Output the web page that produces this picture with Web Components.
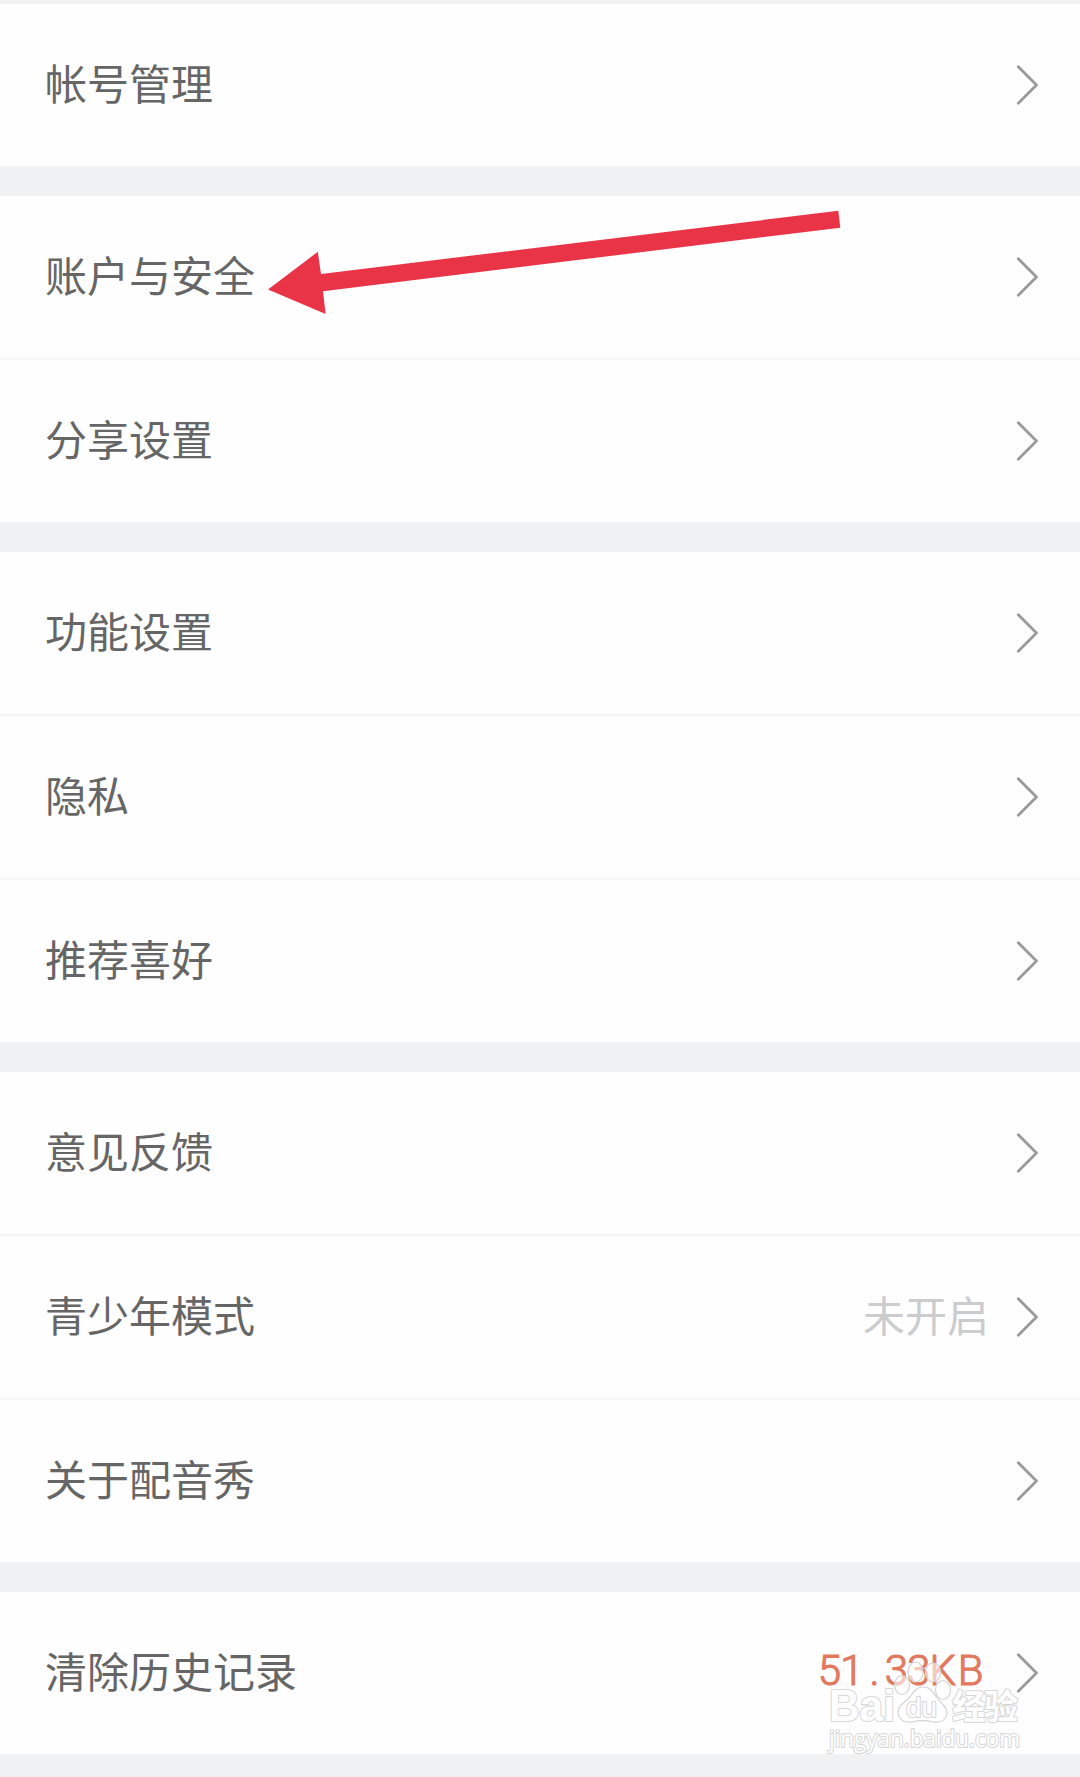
<!DOCTYPE html>
<html lang="zh-CN">
<head>
<meta charset="utf-8">
<title>设置</title>
<style>
html,body{margin:0;background:#f0f1f3}
body{width:1080px;height:1777px;overflow:hidden;position:relative;font-family:"Noto Sans CJK SC",sans-serif}
</style>
</head>
<body>
<settings-page>
  <settings-group><settings-row>帐号管理</settings-row></settings-group>
  <settings-group><settings-row>账户与安全</settings-row><settings-row>分享设置</settings-row></settings-group>
  <settings-group><settings-row>功能设置</settings-row><settings-row>隐私</settings-row><settings-row>推荐喜好</settings-row></settings-group>
  <settings-group><settings-row>意见反馈</settings-row><settings-row>青少年模式<span slot="value">未开启</span></settings-row><settings-row>关于配音秀</settings-row></settings-group>
  <settings-group><settings-row>清除历史记录<size-value slot="value">51.33KB</size-value></settings-row></settings-group>
</settings-page>
<pointer-arrow></pointer-arrow>
<site-watermark></site-watermark>
<script>
function define(name, html){
  customElements.define(name, class extends HTMLElement{
    constructor(){ super(); this.attachShadow({mode:'open'}).innerHTML = html; }
  });
}
define('settings-page', `<style>
  :host{display:flex;flex-direction:column;gap:30px;padding-top:4.4px}
</style><slot></slot>`);
define('settings-group', `<style>
  :host{display:flex;flex-direction:column;gap:2px;background:#f6f6f7}
</style><slot></slot>`);
define('chevron-icon', `<style>
  :host{display:block;width:22px;height:42px}
  svg{display:block}
</style><svg width="22" height="42" viewBox="0 0 22 42" fill="none" stroke="#999a9b" stroke-width="2.8" stroke-linecap="round" stroke-linejoin="round"><path d="M2.3 2.7 20.5 21 2.3 39.3"/></svg>`);
define('settings-row', `<style>
  :host{display:flex;align-items:center;box-sizing:border-box;height:162px;padding:0 42px 0 45px;background:#fefefe;color:#666;font-size:42px;line-height:60px}
  .label{flex:1;padding-bottom:6px}
  .value{margin-right:27px;padding-bottom:6px;color:#cbccce}
</style><div class="label"><slot></slot></div><div class="value"><slot name="value"></slot></div><chevron-icon></chevron-icon>`);
customElements.define('size-value', class extends HTMLElement{
  connectedCallback(){
    const [whole, rest] = this.textContent.split('.');
    this.attachShadow({mode:'open'}).innerHTML = `<style>
      :host{display:block;font-family:Roboto,sans-serif;font-weight:300;font-size:42px;color:#e2795f;-webkit-text-stroke:1.1px #e2795f;letter-spacing:-.9px;padding:2px 4px 0 0;line-height:58px}
      .dot{padding:0 6px 0 7px}
      .unit{letter-spacing:1.6px}
    </style><span>${whole}</span><span class="dot">.</span><span>${rest.slice(0,2)}</span><span class="unit">${rest.slice(2)}</span>`;
  }
});
define('pointer-arrow', `<style>
  :host{position:absolute;left:260px;top:200px;width:590px;height:124px;pointer-events:none}
  svg{display:block}
</style><svg width="590" height="124" viewBox="260 200 590 124"><path fill="#e93447" d="M268 289.5 317.8 251.8 321 274 838.3 210.8 840.3 227.7 323 291.3 325.6 314Z"/></svg>`);
define('site-watermark', `<style>
  :host{position:absolute;left:820px;top:1650px;width:210px;height:110px;pointer-events:none}
  svg{display:block}
  text{paint-order:stroke;stroke:#d8d8d8;stroke-width:2.2px;stroke-linejoin:round;fill:#fff}
</style><svg width="210" height="110" viewBox="820 1650 210 110">
  <g fill="#fff" fill-opacity=".6" stroke="#d4d4d4" stroke-width="1.2">
    <ellipse cx="902" cy="1685" rx="7.500" ry="9.500"/><ellipse cx="915.500" cy="1672" rx="7.500" ry="10"/>
    <ellipse cx="933" cy="1672.500" rx="7.500" ry="9.500"/><ellipse cx="943" cy="1690" rx="7.500" ry="9.500"/>
    <path fill-opacity="1" d="M923 1687C915 1687 914 1693 908 1699C902 1704 898 1707 898 1713C899 1720 905 1723 912 1722C920 1720 926 1720 933 1722C941 1723 946 1720 947 1713C947 1706 941 1703 937 1698C932 1691 930 1687 923 1687Z"/>
  </g>
  <text x="829" y="1721" font-family="Liberation Sans" font-weight="700" font-size="44" textLength="66" lengthAdjust="spacingAndGlyphs">Bai</text>
  <text x="906" y="1717" font-family="Liberation Sans" font-size="27" textLength="31" lengthAdjust="spacingAndGlyphs">du</text>
  <text x="952" y="1719" font-family="Noto Sans CJK SC" font-weight="700" font-size="34" textLength="66">经验</text>
  <text x="829" y="1747" font-family="Open Sans" font-size="23" textLength="191" lengthAdjust="spacingAndGlyphs">jingyan.baidu.com</text>
</svg>`);
</script>
</body>
</html>
